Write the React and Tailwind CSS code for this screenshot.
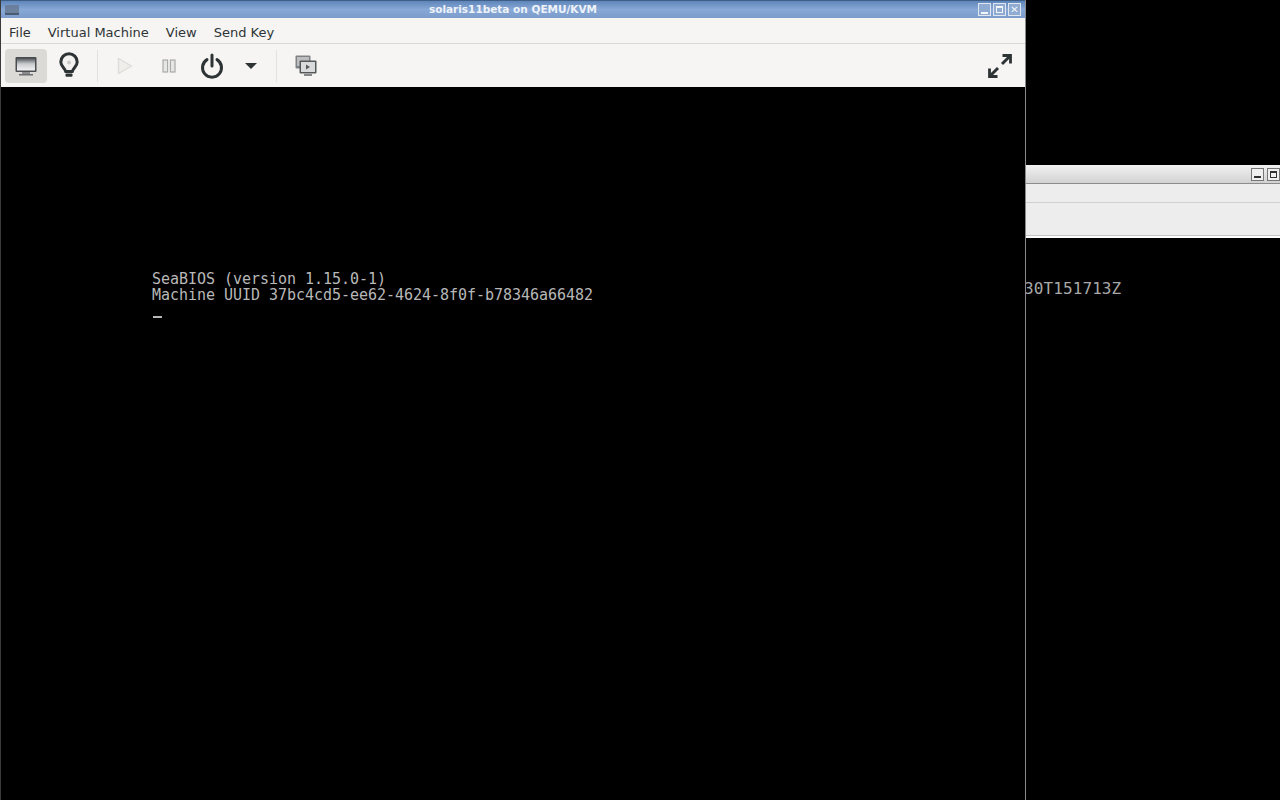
import React from 'react';

const MENUS = ['File', 'Virtual Machine', 'View', 'Send Key'];

function WinButton({ children, className }) {
  return (
    <div className={`w-[13px] h-[13px] border border-[#dfe6f0] bg-[#8fabd2] flex items-center justify-center ${className || ''}`}>
      {children}
    </div>
  );
}

function Monitor() {
  return (
    <svg width="24" height="24" viewBox="0 0 24 24">
      <rect x="1.5" y="3" width="21" height="15" rx="1" fill="#4a4d50" />
      <defs>
        <linearGradient id="scr" x1="0" y1="0" x2="0" y2="1">
          <stop offset="0" stopColor="#55595d" />
          <stop offset="0.45" stopColor="#c9cccf" />
          <stop offset="1" stopColor="#f1f2f3" />
        </linearGradient>
      </defs>
      <rect x="3" y="4.5" width="18" height="12" fill="url(#scr)" />
      <rect x="8" y="18" width="8" height="2" fill="#8a8c8e" />
      <rect x="5" y="20" width="14" height="1.5" fill="#6b6d70" />
    </svg>
  );
}

function Bulb() {
  return (
    <svg width="24" height="28" viewBox="0 0 24 28" fill="none">
      <path d="M8.6 19.5c0-3-4.8-4.6-4.8-9.6a8.2 8.2 0 0 1 16.4 0c0 5-4.8 6.6-4.8 9.6z" stroke="#2e3436" strokeWidth="3" strokeLinejoin="round" fill="#f4f3f1" />
      <circle cx="12" cy="10.5" r="2" fill="#c9cbcb" />
      <rect x="8.5" y="21.4" width="7" height="3.4" rx="1" fill="#2e3436" />
    </svg>
  );
}

function Play() {
  return (
    <svg width="16" height="18" viewBox="0 0 16 18" fill="none">
      <path d="M1.5 1.5v15L14.5 9z" stroke="#dcdcda" strokeWidth="1.4" fill="#efeeeb" strokeLinejoin="round" />
    </svg>
  );
}

function Pause() {
  return (
    <svg width="14" height="14" viewBox="0 0 14 14" fill="none">
      <rect x="1" y="1" width="4.6" height="12" stroke="#a9aba9" strokeWidth="1.2" fill="#e6e6e3" />
      <rect x="8.4" y="1" width="4.6" height="12" stroke="#a9aba9" strokeWidth="1.2" fill="#e6e6e3" />
    </svg>
  );
}

function Power() {
  return (
    <svg width="24" height="26" viewBox="0 0 24 26" fill="none" stroke="#2e3436" strokeWidth="3" strokeLinecap="round">
      <path d="M12 2v11" />
      <path d="M7 6.6a9.5 9.5 0 1 0 10 0" />
    </svg>
  );
}

function Snapshots() {
  return (
    <svg width="22" height="22" viewBox="0 0 22 22">
      <rect x="0.5" y="0.5" width="15" height="13" rx="1" fill="#7f8284" />
      <rect x="2" y="2" width="12" height="9" fill="#bcbec0" />
      <rect x="4.5" y="5.5" width="17" height="13" rx="1" fill="#55585b" />
      <rect x="6" y="7" width="14" height="10" fill="#d9dadb" />
      <path d="M11 9.5v5l4-2.5z" fill="#55585b" />
      <rect x="9" y="19" width="8" height="2" fill="#85878a" />
    </svg>
  );
}

function Fullscreen() {
  return (
    <svg width="26" height="26" viewBox="0 0 26 26" fill="none" stroke="#2e3436" strokeWidth="3">
      <path d="M15 11 23 3" />
      <path d="M15.5 2.5h8v8" strokeWidth="2.8" />
      <path d="M11 15 3 23" />
      <path d="M2.5 15.5v8h8" strokeWidth="2.8" />
    </svg>
  );
}

export default function App() {
  return (
    <div className="relative w-[1280px] h-[800px] overflow-hidden bg-black font-['DejaVu_Sans',sans-serif]">
      {/* window behind */}
      <div className="absolute left-[1026px] top-[165px] w-[254px] h-[635px] flex flex-col">
        <div className="h-[19px] shrink-0 bg-gradient-to-b from-[#f2f2f2] to-[#d2d2d2] border-b border-[#8c8c8c] flex items-center justify-end gap-[3px]">
          <div className="w-[13px] h-[13px] border border-[#777] bg-[#f0f0f0] flex items-end justify-center pb-[2px]">
            <div className="w-[7px] h-[2px] bg-[#333]" />
          </div>
          <div className="w-[13px] h-[13px] border border-[#777] bg-[#f0f0f0] flex items-center justify-center">
            <div className="w-[7px] h-[7px] border border-t-2 border-[#333]" />
          </div>
        </div>
        <div className="h-[19px] shrink-0 bg-[#ededed] border-b border-[#d0d0d0]" />
        <div className="h-[33px] shrink-0 bg-[#ededed] border-b border-[#c4c4c4]" />
        <div className="h-[2px] shrink-0 bg-white" />
        <div className="flex-1 bg-black pt-[41px] relative overflow-hidden">
          <div className="ml-[-2px] text-[16px] tracking-[0.1px] leading-[20px] text-[#a8a8a8] font-['DejaVu_Sans_Mono',monospace] whitespace-pre">30T151713Z</div>
        </div>
      </div>

      {/* main window */}
      <div className="absolute left-0 top-0 w-[1026px] h-[800px] flex flex-col bg-black border-r border-[#8a8a8a] border-l border-l-[#3a3a3a]">
        <div className="h-[18px] shrink-0 bg-gradient-to-b from-[#5f86ba] via-[#88a8d6] to-[#7b9ccb] border-t border-[#3f5f86] flex items-center">
          <div className="w-[47px] shrink-0 pl-[4px]">
            <div className="w-[14px] h-[10px] bg-[#66788f] border-b-2 border-[#3c4a58] opacity-80" />
          </div>
          <div className="flex-1 text-center text-[10.5px] font-bold text-[#eef3fa] leading-none">solaris11beta on QEMU/KVM</div>
          <div className="flex items-center gap-[2px] mr-[4px]">
            <WinButton>
              <div className="w-[7px] h-[2px] bg-[#f2f5fa] mt-[6px]" />
            </WinButton>
            <WinButton>
              <div className="w-[7px] h-[7px] border border-t-2 border-[#f2f5fa]" />
            </WinButton>
            <WinButton>
              <div className="text-[#f2f5fa] text-[10px] font-bold leading-none">✕</div>
            </WinButton>
          </div>
        </div>

        <div className="h-[26px] shrink-0 bg-[#f6f5f3] flex items-center gap-[17px] pl-[8px] pt-[4px] text-[13px] text-[#2e3436] border-b border-[#d8d8d5]">
          {MENUS.map(m => (
            <span key={m}>{m}</span>
          ))}
        </div>

        <div className="h-[43px] shrink-0 bg-[#f6f5f3] flex items-center">
          <div className="ml-[4px] w-[42px] h-[34px] rounded-[4px] bg-[#dcdad6] flex items-center justify-center">
            <Monitor />
          </div>
          <div className="w-[44px] flex justify-center"><Bulb /></div>
          <div className="w-px h-[32px] bg-[#e3e2df] ml-[6px]" />
          <div className="w-[54px] flex justify-center"><Play /></div>
          <div className="w-[33px] flex justify-center"><Pause /></div>
          <div className="w-[54px] flex justify-center"><Power /></div>
          <div className="w-[24px] flex justify-center">
            <div className="w-0 h-0 border-x-[6px] border-x-transparent border-t-[6px] border-t-[#2e3436]" />
          </div>
          <div className="w-px h-[32px] bg-[#e3e2df] ml-[13px]" />
          <div className="ml-[18px]"><Snapshots /></div>
          <div className="ml-auto mr-[12px]"><Fullscreen /></div>
        </div>

        <div className="flex-1 bg-black pl-[151px] pt-[184px] font-['DejaVu_Sans_Mono',monospace] text-[15px] tracking-[-0.03px] leading-[16px] text-[#b8b8b8] whitespace-pre">
          <div>SeaBIOS (version 1.15.0-1)</div>
          <div>Machine UUID 37bc4cd5-ee62-4624-8f0f-b78346a66482</div>
          <div className="mt-[13px] ml-[1px] w-[9px] h-[2px] bg-[#b8b8b8]" />
        </div>
      </div>
    </div>
  );
}
